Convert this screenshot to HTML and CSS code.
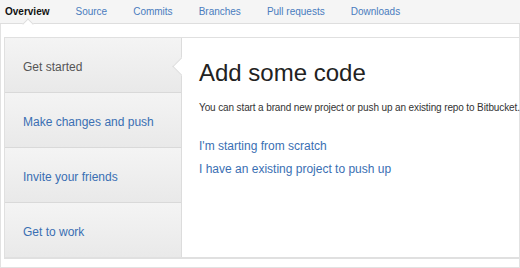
FILE: index.html
```html
<html>
<head>
  <link rel="stylesheet" href="styles.css">
</head>
<body>
  <div id="abas">
    <a class="aba ativa" href="#">Overview</a>
    <a class="aba" href="#">Source</a>
    <a class="aba" href="#">Commits</a>
    <a class="aba" href="#">Branches</a>
    <a class="aba" href="#">Pull requests</a>
    <a class="aba" href="#">Downloads</a>
  </div>

  <div id="pagina">
    <div id="caixa">
      <div id="menu">
        <div class="item ativo">Get started</div>
        <div class="item"><a href="#">Make changes and push</a></div>
        <div class="item"><a href="#">Invite your friends</a></div>
        <div class="item"><a href="#">Get to work</a></div>
      </div>

      <div id="conteudo">
        <h1>Add some code</h1>
        <p class="texto">You can start a brand new project or push up an existing repo to Bitbucket.</p>
        <a class="opcao" href="#">I'm starting from scratch</a>
        <a class="opcao" href="#">I have an existing project to push up</a>
      </div>
    </div>
  </div>
</body>
</html>
```

FILE: styles.css
```css
* {
    box-sizing: border-box;
    margin: 0;
    padding: 0;
}

body {
    font-family: "Liberation Sans", Arial, sans-serif;
    background-color: white;
    color: #333;
    width: 520px;
}

a {
    text-decoration: none;
    color: #3572b0;
}

#abas {
    display: flex;
    height: 24px;
    background-color: #f5f5f5;
    border-bottom: 1px solid #dedede;
    padding-left: 5px;
}

.aba {
    position: relative;
    font-size: 10px;
    line-height: 23px;
    color: #4a7cbe;
    margin-right: 26px;
}

.aba.ativa {
    color: #111;
    font-weight: bold;
}

/* setinha debaixo da aba ativa */
.aba.ativa::after {
    content: "";
    position: absolute;
    left: 19px;
    bottom: -5px;
    width: 7px;
    height: 7px;
    background-color: white;
    border-left: 1px solid #dedede;
    border-top: 1px solid #dedede;
    transform: rotate(45deg);
}

#pagina {
    border-left: 1px solid #e2e2e2;
    border-right: 1px solid #e2e2e2;
    border-bottom: 1px solid #e2e2e2;
    padding: 13px 0 8px 3px;
    height: 244px;
}

#caixa {
    display: flex;
    height: 222px;
    border: 1px solid #e0e0e0;
    border-bottom-width: 2px;
    border-right: none;
}

#menu {
    width: 177px;
    flex-shrink: 0;
    border-right: 1px solid #dcdcdc;
    display: flex;
    flex-direction: column;
}

.item {
    position: relative;
    flex: 1;
    display: flex;
    align-items: center;
    padding: 4px 0 0 18px;
    font-size: 12px;
    background: linear-gradient(#f4f4f4, #e9e9e9);
    border-bottom: 1px solid #d9d9d9;
}

.item:last-child {
    border-bottom: none;
}

.item a {
    color: #3a6fb3;
}

.ativo {
    color: #555;
}

/* recorte branco apontando para o item ativo */
.ativo::after {
    content: "";
    position: absolute;
    right: -7px;
    top: 50%;
    width: 12px;
    height: 12px;
    margin-top: -5px;
    background-color: white;
    border-left: 1px solid #dcdcdc;
    border-bottom: 1px solid #dcdcdc;
    transform: rotate(45deg);
}

#conteudo {
    flex: 1;
    min-width: 0;
    padding: 20px 0 0 17px;
}

h1 {
    font-size: 24px;
    font-weight: normal;
    color: #222;
    line-height: 30px;
}

.texto {
    font-size: 10px;
    letter-spacing: -0.12px;
    white-space: nowrap;
    color: #333;
    margin-top: 14px;
    margin-bottom: 22px;
}

.opcao {
    display: block;
    font-size: 12px;
    line-height: 23px;
    color: #3a6fb3;
}
```
